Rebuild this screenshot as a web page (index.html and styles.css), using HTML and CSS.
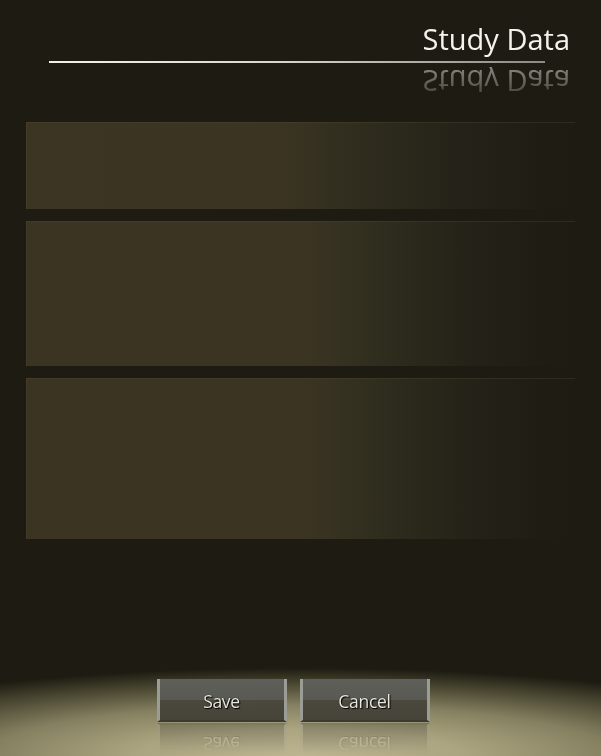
FILE: index.html
```html
<!DOCTYPE html>
<html lang="en">
<head>
<meta charset="utf-8">
<title>Study Data</title>
<link rel="stylesheet" href="styles.css">
</head>
<body>
<div class="screen">
  <header class="head">
    <h1 class="title">Study Data</h1>
    <div class="rule"></div>
  </header>
  <main class="panels">
    <section class="panel panel-short"></section>
    <section class="panel panel-mid"></section>
    <section class="panel panel-tall"></section>
  </main>
  <footer class="actions">
    <button class="btn" type="button">Save</button>
    <button class="btn" type="button">Cancel</button>
  </footer>
</div>
</body>
</html>
```

FILE: styles.css
```css
* { box-sizing: border-box; }

html, body {
  margin: 0;
  padding: 0;
  background: #1e1c12;
}

.screen {
  width: 601px;
  height: 756px;
  overflow: hidden;
  display: flex;
  flex-direction: column;
  font-family: "Open Sans", "DejaVu Sans", sans-serif;
  background:
    radial-gradient(ellipse 540px 88px at 50% 100%,
      #bdb592 0%, #aca581 30%, #858060 58%, #45422e 84%, rgba(30,28,18,0) 100%),
    #1e1c12;
}

.head {
  padding-top: 24px;
  display: flex;
  flex-direction: column;
}

.title {
  margin: 0;
  padding-right: 31px;
  text-align: right;
  font-weight: 400;
  font-size: 29px;
  line-height: 29px;
  color: #f4f4ee;
  -webkit-box-reflect: below 14px linear-gradient(to bottom, rgba(255,255,255,0.18) 0%, rgba(255,255,255,0.5) 100%);
}

.rule {
  margin: 8px 56px 0 49px;
  height: 2px;
  background: linear-gradient(to right, #f2f2ea 0%, #d8d8d0 45%, #8a8a84 100%);
}

.panels {
  margin: 59px 26px 0 26px;
  display: flex;
  flex-direction: column;
  gap: 12px;
}

.panel {
  background: linear-gradient(to right,
    #3b3422 0%, #3b3422 50%, #333020 60%, #2a281b 72%, #222017 85%, #1f1d13 95%, #1e1c12 100%);
  box-shadow: inset 1px 1px 0 rgba(80, 74, 50, 0.35);
}

.panel-short {
  height: 87px;
  background: linear-gradient(to right,
    #3c3523 0%, #3b3422 45%, #343020 55%, #2b291c 68%, #232118 82%, #1f1d13 95%, #1e1c12 100%);
}

.panel-mid { height: 145px; }
.panel-tall { height: 161px; }

.actions {
  margin-top: auto;
  padding: 0 15px 34px 0;
  display: flex;
  justify-content: center;
  gap: 13px;
}

.btn {
  width: 130px;
  height: 43px;
  padding: 2px 0 0;
  border: none;
  border-left: 3px solid #9c9c96;
  border-right: 3px solid #9c9c96;
  border-bottom: 2px solid #3a3a30;
  background: linear-gradient(to bottom,
    #5f5f59 0%, #5a5a54 50%, #4b493c 50%, #45443a 100%);
  font-family: "Open Sans", "DejaVu Sans", sans-serif;
  font-size: 17.5px;
  letter-spacing: -0.3px;
  color: #e8e8e0;
  text-shadow: 1px 1px 1px #000, 0 0 1px #000;
  -webkit-box-reflect: below 1px linear-gradient(to bottom, transparent 25%, rgba(255,255,255,0.35));
}
```
